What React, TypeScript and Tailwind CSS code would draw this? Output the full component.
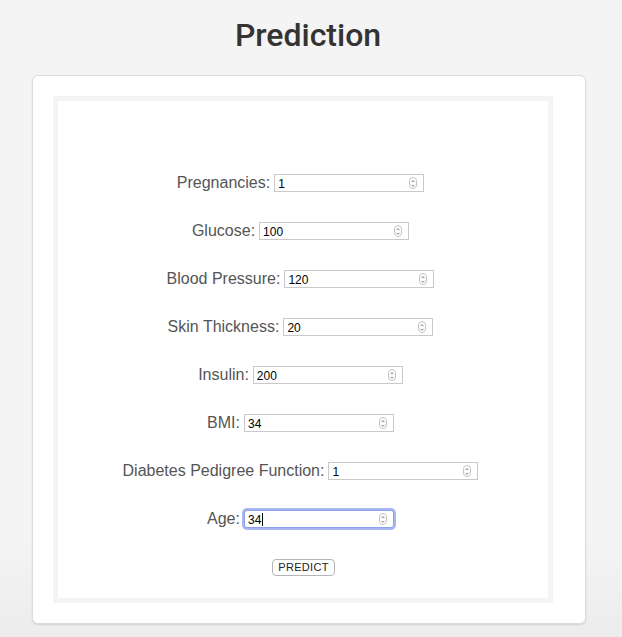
const fields = [
  { label: 'Pregnancies', value: '1' },
  { label: 'Glucose', value: '100' },
  { label: 'Blood Pressure', value: '120' },
  { label: 'Skin Thickness', value: '20' },
  { label: 'Insulin', value: '200' },
  { label: 'BMI', value: '34' },
  { label: 'Diabetes Pedigree Function', value: '1' },
  { label: 'Age', value: '34', focused: true },
]

function Spinner() {
  return (
    <span className="absolute right-[6px] top-1/2 -translate-y-1/2 flex h-[12px] w-[8px] flex-col items-center justify-center rounded-full border border-[#c4c4c4] bg-white">
      <svg width="6" height="9" viewBox="0 0 6 9" fill="none">
        <path d="M1.5 3.2 3 1.7 4.5 3.2" stroke="#6b6b6b" strokeWidth="0.9" />
        <path d="M1.5 5.8 3 7.3 4.5 5.8" stroke="#6b6b6b" strokeWidth="0.9" />
      </svg>
    </span>
  )
}

function NumberBox({ value, focused }: { value: string; focused?: boolean }) {
  return (
    <span
      className={
        focused
          ? 'relative flex h-[18px] w-[150px] items-center rounded-[3px] border border-[#8ea2ec] bg-white pl-[3px] text-[12px] leading-none text-black shadow-[0_0_0_2px_#a6b7f2]'
          : 'relative flex h-[18px] w-[150px] items-center border border-[#c9c9c9] bg-white pl-[3px] text-[12px] leading-none text-black'
      }
    >
      <span className="pt-[1px]">{value}</span>
      {focused && <span className="ml-[1px] h-[13px] w-px bg-black" />}
      <Spinner />
    </span>
  )
}

export default function App() {
  return (
    <div
      className="min-h-screen bg-gradient-to-b from-[#f4f4f4] from-85% to-[#ececec] pt-[16px] pb-[15px]"
      style={{ fontFamily: '"Liberation Sans", Arial, sans-serif' }}
    >
      <h1
        className="pr-[6px] text-center text-[32px] font-medium leading-[38px] text-[#333]"
        style={{ fontFamily: 'Roboto, "Liberation Sans", sans-serif' }}
      >
        Prediction
      </h1>

      <div className="ml-[32px] mt-[21px] w-[554px] rounded-[6px] border border-[#dcdcdc] bg-white p-[20px] pr-[31px] shadow-[0_1px_2px_rgba(0,0,0,0.12)]">
        <div className="h-[507px] w-[500px] border-[5px] border-[#f4f4f4] bg-white">
          <div className="flex flex-col items-center gap-[30px] pt-[73px] pr-[5px]">
            {fields.map((f) => (
              <div key={f.label} className="flex h-[18px] items-center">
                <label className="mr-[4px] text-[16px] leading-none text-[#555]">
                  {f.label}:
                </label>
                <NumberBox value={f.value} focused={f.focused} />
              </div>
            ))}
          </div>
          <div className="mt-[31px] flex justify-center pl-[1px]">
            <button className="h-[17px] w-[63px] rounded-[4px] border border-[#b5b5b5] bg-white text-[11px] leading-none tracking-[0.3px] text-[#222]">
              PREDICT
            </button>
          </div>
        </div>
      </div>
    </div>
  )
}
